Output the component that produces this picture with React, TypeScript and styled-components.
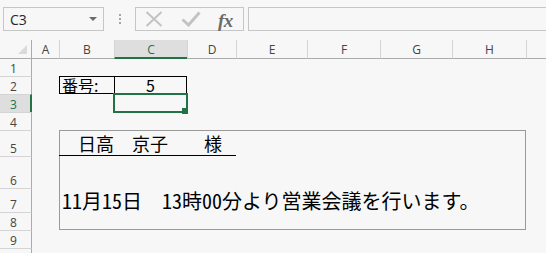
import React from "react";
import styled, { createGlobalStyle } from "styled-components";

const Global = createGlobalStyle`
  html, body { margin: 0; padding: 0; background: #f7f7f7; }
  body { width: 546px; height: 253px; overflow: hidden; }
`;

const UI_FONT = `"Open Sans", "Noto Sans", "Liberation Sans", sans-serif`;
const JP_FONT = `"Noto Sans CJK JP", "Noto Sans", sans-serif`;
const GREEN = "#217346";

const Page = styled.div`
  width: 546px;
  height: 253px;
  overflow: hidden;
  background: #f7f7f7;
  display: flex;
  flex-direction: column;
`;

const TopBar = styled.div`
  height: 40px;
  flex: none;
  box-sizing: border-box;
  padding: 7px 0 9px 3px;
  display: flex;
  align-items: stretch;
`;

const NameBox = styled.div`
  width: 101px;
  box-sizing: border-box;
  border: 1px solid #c6c6c6;
  display: flex;
  align-items: center;
  justify-content: space-between;
  padding: 0 6px 0 6px;
  font-family: ${UI_FONT};
  font-size: 14px;
  color: #262626;
`;

const DropArrow = styled.span`
  width: 0;
  height: 0;
  border-left: 4px solid transparent;
  border-right: 4px solid transparent;
  border-top: 4px solid #6a6a6a;
`;

const Grip = styled.div`
  width: 31px;
  display: flex;
  flex-direction: column;
  align-items: center;
  justify-content: center;
  gap: 2px;
`;

const Dot = styled.span`
  width: 2px;
  height: 2px;
  background: #a6a6a6;
`;

const CommandBox = styled.div`
  width: 109px;
  box-sizing: border-box;
  border: 1px solid #c6c6c6;
  display: flex;
  align-items: center;
  padding-left: 9px;
`;

const IconSlot = styled.div<{ $w: number }>`
  width: ${(p) => p.$w}px;
  display: flex;
  align-items: center;
`;

const FxLabel = styled.span`
  font-family: "Liberation Serif", "DejaVu Serif", serif;
  font-style: italic;
  font-weight: bold;
  font-size: 19px;
  color: #6b6b6b;
  line-height: 1;
  margin-top: 2px;
  letter-spacing: -0.5px;
`;

const FormulaInput = styled.div`
  flex: 1;
  margin-left: 4px;
  border: 1px solid #c6c6c6;
  border-right: none;
`;

const Sheet = styled.div`
  display: grid;
  grid-template-columns: 32px 27px 55px 73px 49px 71px 73px 72px 74px 72px;
  grid-template-rows: 19px 17px 18px 18px 18px 26px 32px 24px 18px 18px 18px;
  flex: none;
`;

const Corner = styled.div`
  grid-column: 1;
  grid-row: 1;
  box-sizing: border-box;
  border-right: 1px solid #ababab;
  border-bottom: 1px solid #ababab;
  display: flex;
  align-items: flex-end;
  justify-content: flex-end;
  padding: 0 4px 4px 0;
`;

const CornerTriangle = styled.span`
  width: 0;
  height: 0;
  border-left: 9px solid transparent;
  border-bottom: 9px solid #dadada;
`;

const ColHeader = styled.div<{ $col: number; $active?: boolean; $first?: boolean }>`
  grid-row: 1;
  grid-column: ${(p) => p.$col};
  box-sizing: border-box;
  border-left: ${(p) => (p.$first ? "none" : "1px solid #d4d4d4")};
  border-bottom: ${(p) => (p.$active ? `2px solid ${GREEN}` : "1px solid #ababab")};
  background: ${(p) => (p.$active ? "#dedede" : "transparent")};
  color: ${(p) => (p.$active ? GREEN : "#444")};
  font-family: ${UI_FONT};
  font-size: 12px;
  display: flex;
  align-items: center;
  justify-content: center;
  padding-top: ${(p) => (p.$active ? 2 : 1)}px;
`;

const RowHeader = styled.div<{ $row: number; $active?: boolean; $first?: boolean }>`
  grid-column: 1;
  grid-row: ${(p) => p.$row};
  box-sizing: border-box;
  border-top: ${(p) => (p.$first ? "none" : "1px solid #d4d4d4")};
  border-right: ${(p) => (p.$active ? `2px solid ${GREEN}` : "1px solid #ababab")};
  background: ${(p) => (p.$active ? "#dedede" : "transparent")};
  color: ${(p) => (p.$active ? GREEN : "#444")};
  font-family: ${UI_FONT};
  font-size: 12px;
  line-height: 14px;
  display: flex;
  align-items: flex-end;
  justify-content: center;
  padding-right: ${(p) => (p.$active ? 3 : 4)}px;
`;

const LabelCell = styled.div<{ $col: string; $row: string; $noRight?: boolean; $center?: boolean }>`
  grid-column: ${(p) => p.$col};
  grid-row: ${(p) => p.$row};
  box-sizing: border-box;
  border: 1px solid #000;
  border-right: ${(p) => (p.$noRight ? "none" : "1px solid #000")};
  font-family: ${JP_FONT};
  font-size: 16px;
  line-height: 16px;
  color: #000;
  display: flex;
  align-items: center;
  justify-content: ${(p) => (p.$center ? "center" : "flex-start")};
  padding-left: ${(p) => (p.$center ? 0 : 2)}px;
`;

const Frame = styled.div`
  grid-column: 3 / 10;
  grid-row: 6 / 10;
  box-sizing: border-box;
  border: 1px solid #9a9a9a;
`;

const Underline = styled.div`
  grid-column: 3 / 6;
  grid-row: 6;
  box-sizing: border-box;
  border-bottom: 1px solid #000;
`;

const TextCell = styled.div<{ $row: number; $size: number; $pad: number; $bottom: number }>`
  grid-column: 3 / 10;
  grid-row: ${(p) => p.$row};
  box-sizing: border-box;
  font-family: ${JP_FONT};
  font-size: ${(p) => p.$size}px;
  line-height: 1;
  color: #000;
  white-space: pre;
  display: flex;
  align-items: flex-end;
  padding-left: ${(p) => p.$pad}px;
  padding-bottom: ${(p) => p.$bottom}px;
`;

const Num = styled.span`
  font-feature-settings: "hwid";
`;

const Selection = styled.div`
  grid-column: 4;
  grid-row: 4;
  margin: -1px -1px -1px -1px;
  box-sizing: border-box;
  border: 2px solid ${GREEN};
  position: relative;
`;

const Handle = styled.span`
  position: absolute;
  right: -2px;
  bottom: -3px;
  width: 6px;
  height: 6px;
  background: ${GREEN};
`;

const columns = ["A", "B", "C", "D", "E", "F", "G", "H", ""];
const rows = [1, 2, 3, 4, 5, 6, 7, 8, 9, 10];

export default function App() {
  return (
    <Page>
      <Global />
      <TopBar>
        <NameBox>
          <span>C3</span>
          <DropArrow />
        </NameBox>
        <Grip>
          <Dot />
          <Dot />
          <Dot />
        </Grip>
        <CommandBox>
          <IconSlot $w={36}>
            <svg width="18" height="16" viewBox="0 0 18 16">
              <path d="M1.5 1 L16.5 15 M16.5 1 L1.5 15" stroke="#c3c3c3" strokeWidth="2" fill="none" />
            </svg>
          </IconSlot>
          <IconSlot $w={37}>
            <svg width="20" height="16" viewBox="0 0 20 16">
              <path d="M1.5 8.5 L7.5 14 L18.5 1.5" stroke="#c3c3c3" strokeWidth="3" fill="none" />
            </svg>
          </IconSlot>
          <IconSlot $w={24}>
            <FxLabel>fx</FxLabel>
          </IconSlot>
        </CommandBox>
        <FormulaInput />
      </TopBar>
      <Sheet>
        <Corner>
          <CornerTriangle />
        </Corner>
        {columns.map((c, i) => (
          <ColHeader key={i} $col={i + 2} $active={c === "C"} $first={i === 0}>
            {c}
          </ColHeader>
        ))}
        {rows.map((r) => (
          <RowHeader key={r} $row={r + 1} $active={r === 3} $first={r === 1}>
            {r < 10 ? r : ""}
          </RowHeader>
        ))}
        <LabelCell $col="3" $row="3" $noRight>
          番号:
        </LabelCell>
        <LabelCell $col="4" $row="3" $center>
          5
        </LabelCell>
        <Frame />
        <Underline />
        <TextCell $row={6} $size={18} $pad={1} $bottom={4}>
          {"　日高　京子　　様"}
        </TextCell>
        <TextCell $row={8} $size={20} $pad={3} $bottom={1}>
          <Num>11</Num>月<Num>15</Num>日{"　"}<Num>13</Num>時<Num>00</Num>分より営業会議を行います。
        </TextCell>
        <Selection>
          <Handle />
        </Selection>
      </Sheet>
    </Page>
  );
}
